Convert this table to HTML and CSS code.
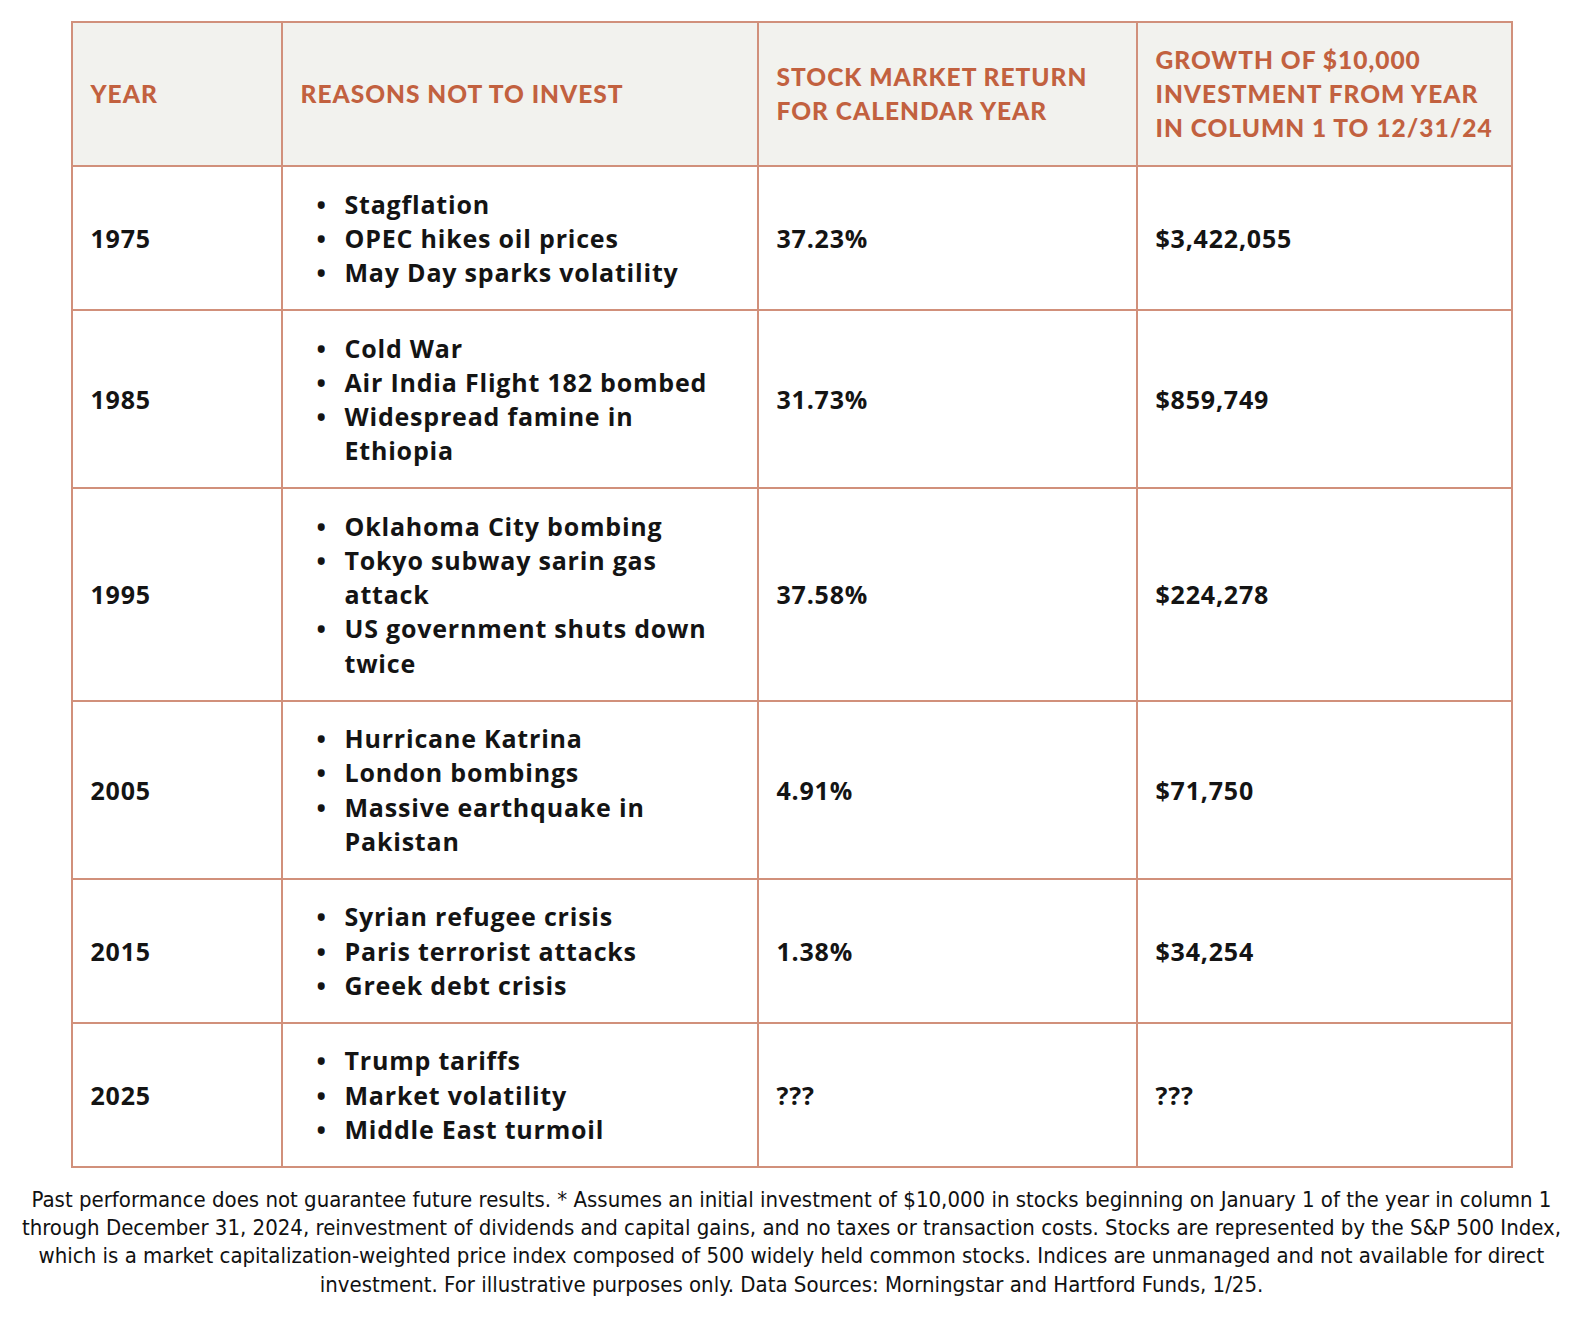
FILE: index.html
```html
<!DOCTYPE html>
<html lang="en">
<head>
<meta charset="utf-8">
<title>Reasons Not to Invest</title>
<link rel="stylesheet" href="styles.css">
</head>
<body>
<main class="page">
  <table class="returns">
    <colgroup>
      <col class="c-year">
      <col class="c-reasons">
      <col class="c-return">
      <col class="c-growth">
    </colgroup>
    <thead>
      <tr>
        <th>YEAR</th>
        <th>REASONS NOT TO INVEST</th>
        <th>STOCK MARKET RETURN<br>FOR CALENDAR YEAR</th>
        <th>GROWTH OF $10,000<br>INVESTMENT FROM YEAR<br>IN COLUMN 1 TO 12/31/24</th>
      </tr>
    </thead>
    <tbody>
      <tr>
        <td>1975</td>
        <td class="reasons-cell"><ul class="reasons"><li>Stagflation</li><li>OPEC hikes oil prices</li><li>May Day sparks volatility</li></ul></td>
        <td>37.23%</td>
        <td>$3,422,055</td>
      </tr>
      <tr>
        <td>1985</td>
        <td class="reasons-cell"><ul class="reasons"><li>Cold War</li><li>Air India Flight 182 bombed</li><li>Widespread famine in Ethiopia</li></ul></td>
        <td>31.73%</td>
        <td>$859,749</td>
      </tr>
      <tr>
        <td>1995</td>
        <td class="reasons-cell"><ul class="reasons"><li>Oklahoma City bombing</li><li>Tokyo subway sarin gas attack</li><li>US government shuts down twice</li></ul></td>
        <td>37.58%</td>
        <td>$224,278</td>
      </tr>
      <tr>
        <td>2005</td>
        <td class="reasons-cell"><ul class="reasons"><li>Hurricane Katrina</li><li>London bombings</li><li>Massive earthquake in Pakistan</li></ul></td>
        <td>4.91%</td>
        <td>$71,750</td>
      </tr>
      <tr>
        <td>2015</td>
        <td class="reasons-cell"><ul class="reasons"><li>Syrian refugee crisis</li><li>Paris terrorist attacks</li><li>Greek debt crisis</li></ul></td>
        <td>1.38%</td>
        <td>$34,254</td>
      </tr>
      <tr>
        <td>2025</td>
        <td class="reasons-cell"><ul class="reasons"><li>Trump tariffs</li><li>Market volatility</li><li>Middle East turmoil</li></ul></td>
        <td>???</td>
        <td>???</td>
      </tr>
    </tbody>
  </table>
  <p class="disclaimer">Past performance does not guarantee future results. * Assumes an initial investment of $10,000 in stocks beginning on January 1 of the year in column 1<br>through December 31, 2024, reinvestment of dividends and capital gains, and no taxes or transaction costs. Stocks are represented by the S&amp;P 500 Index,<br>which is a market capitalization-weighted price index composed of 500 widely held common stocks. Indices are unmanaged and not available for direct<br>investment. For illustrative purposes only. Data Sources: Morningstar and Hartford Funds, 1/25.</p>
</main>
</body>
</html>
```

FILE: styles.css
```css
html, body {
  margin: 0;
  padding: 0;
  background: #ffffff;
}

.page {
  padding-top: 21px;
  display: flex;
  flex-direction: column;
  align-items: center;
}

.returns {
  width: 1440px;
  border-collapse: collapse;
  table-layout: fixed;
  border: 2px solid #d1907b;
  font-family: "Open Sans", "Noto Sans", sans-serif;
  font-weight: 700;
  color: #141414;
}

.c-year { width: 210px; }
.c-reasons { width: 476px; }
.c-return { width: 379px; }
.c-growth { width: 375px; }

.returns th,
.returns td {
  border: 2px solid #d1907b;
  text-align: left;
  vertical-align: middle;
  padding: 19.7px 17px 19.7px 18px;
  line-height: 34.2px;
}

.returns th {
  background: #f2f2ee;
  color: #c2613f;
  font-family: "Lato", "Open Sans", sans-serif;
  font-weight: 900;
  font-size: 24.5px;
  letter-spacing: 1px;
  white-space: nowrap;
  padding-right: 8px;
}

.returns td {
  font-size: 25px;
  letter-spacing: 0.8px;
}

.returns td.reasons-cell {
  padding-right: 30px;
}

.reasons {
  list-style: none;
  margin: 0;
  padding: 0 0 0 16px;
}

.reasons li {
  display: flex;
}

.reasons li::before {
  content: "\2022";
  flex: 0 0 28px;
  letter-spacing: 0;
}

.disclaimer {
  margin: 18px 0 0;
  padding: 0 20px;
  text-align: center;
  font-family: "Liberation Sans Narrow", "DejaVu Sans Condensed", "Roboto", sans-serif;
  font-size: 22px;
  line-height: 28.3px;
  color: #111111;
  white-space: nowrap;
}
```
